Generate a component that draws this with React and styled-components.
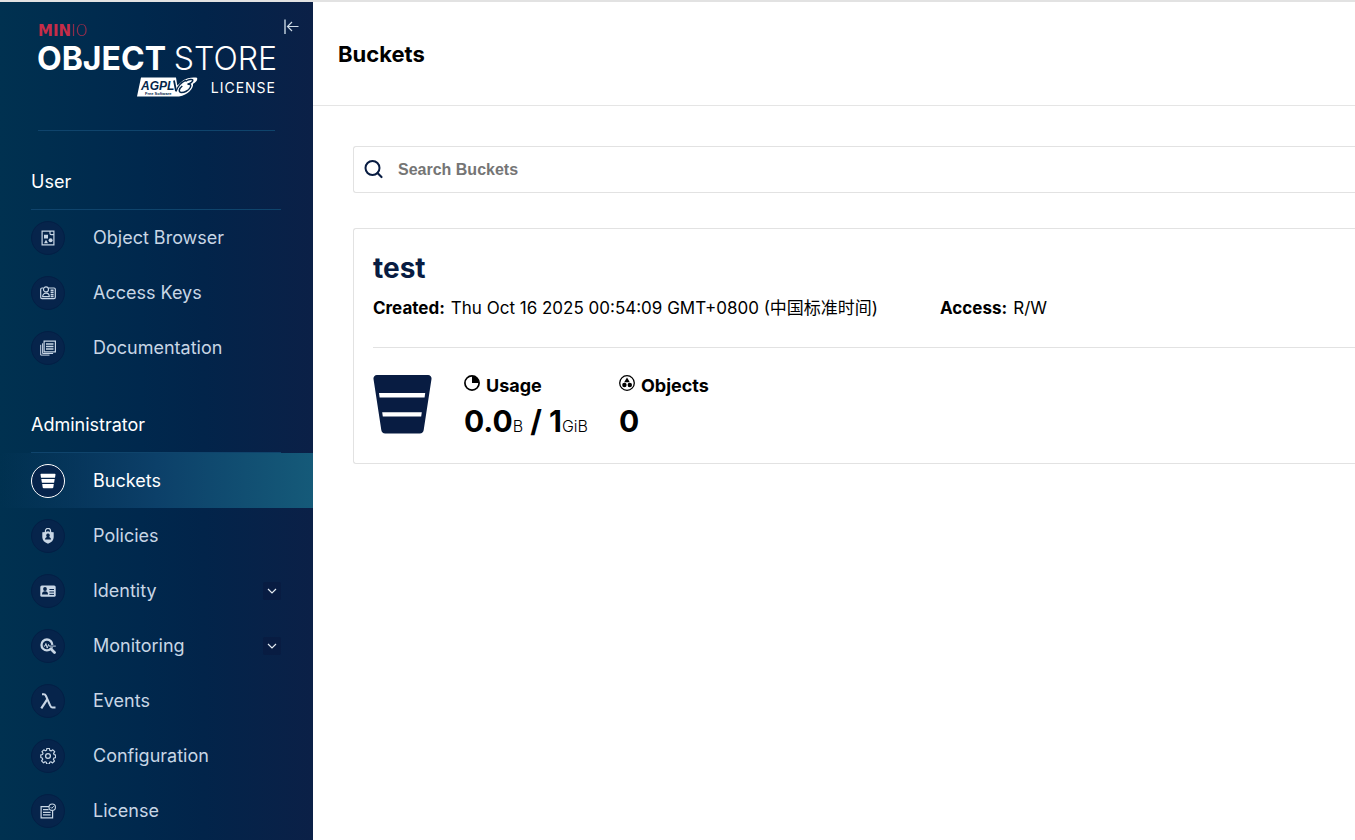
import React from "react";
import styled, { createGlobalStyle } from "styled-components";

const sans = `Inter, "Noto Sans CJK SC", "Liberation Sans", sans-serif`;

const GlobalStyle = createGlobalStyle`
  *, *::before, *::after { box-sizing: border-box; }
  body {
    margin: 0;
    background: #fff;
    color: #000;
    font-family: ${sans};
    font-size: 18px;
  }
`;

const Page = styled.div`
  display: flex;
  min-height: 100vh;
  border-top: 2px solid #e2e2e2;
  overflow: hidden;
`;

const Sidebar = styled.aside`
  flex: 0 0 313px;
  background: linear-gradient(90deg, #003150 0%, #00284d 45%, #02244a 65%, #0b2047 100%);
  color: #fff;
`;

/* ---------- product logo ---------- */

const Brand = styled.div`
  position: relative;
  height: 130px;
  margin: 0 38px;
  padding-top: 20px;
`;

const BrandRule = styled.hr`
  margin: 34px 0 0;
  border: 0;
  border-top: 1px solid #0f446c;
`;

const Maker = styled.div`
  font: 700 15px/18px "DejaVu Sans", ${sans};
  color: #c72c48;

  span {
    font-weight: 200;
  }
`;

const Product = styled.div`
  display: flex;
  justify-content: space-between;
  margin: 0 -2px 0 -1px;
  font-size: 32px;
  line-height: 38px;
  font-weight: 700;
  white-space: nowrap;

  span {
    font-weight: 300;
  }
`;

const LicenseLine = styled.div`
  display: flex;
  justify-content: flex-end;
  align-items: center;
  gap: 13px;
  height: 18px;
  font-size: 14px;
`;

const LicenseWord = styled.span`
  margin-right: -1px;
  letter-spacing: 1px;
  font-weight: 400;
`;

const CollapseButton = styled.button`
  position: absolute;
  top: 16px;
  right: -24px;
  display: flex;
  width: 16px;
  height: 18px;
  padding: 0;
  border: 0;
  background: none;
  color: #cfdbe6;
  cursor: pointer;
`;

/* ---------- navigation ---------- */

const GroupTitle = styled.h2`
  margin: 0 32px 0 31px;
  padding: 39px 0 16px;
  border-bottom: 1px solid #0f446c;
  font-size: 18px;
  line-height: 22px;
  font-weight: 400;
`;

const NavList = styled.ul`
  margin: 0;
  padding: 0;
  list-style: none;
`;

const NavLink = styled.a`
  display: flex;
  align-items: center;
  height: 55px;
  padding: 0 32px 0 31px;
  color: ${(p) => (p.$active ? "#fff" : "#c8d6e5")};
  background: ${(p) =>
    p.$active ? "linear-gradient(90deg, #00305000 0%, #0c4069 50%, #155a79 100%)" : "none"};
  text-decoration: none;
`;

const IconDisc = styled.span`
  display: flex;
  flex: none;
  align-items: center;
  justify-content: center;
  width: 34px;
  height: 34px;
  margin-right: 28px;
  border: 1px solid ${(p) => (p.$active ? "#fff" : "#031f45")};
  border-radius: 50%;
  background: #06244b;
`;

const NavLabel = styled.span`
  flex: 1;
`;

const Toggle = styled.span`
  display: flex;
  align-items: center;
  justify-content: center;
  width: 18px;
  height: 18px;
  border-radius: 2px;
  background: #081c42;
`;

/* ---------- main area ---------- */

const Main = styled.main`
  flex: 1;
  min-width: 0;
`;

const Header = styled.header`
  display: flex;
  align-items: center;
  height: 104px;
  padding: 0 25px;
  border-bottom: 1px solid #e5e5e5;
`;

const PageTitle = styled.h1`
  margin: 0;
  font-size: 22px;
  line-height: 28px;
  font-weight: 700;
`;

const Content = styled.div`
  display: flex;
  flex-direction: column;
  gap: 35px;
  padding: 40px 0 40px 40px;
`;

const SearchBox = styled.label`
  display: flex;
  align-items: center;
  gap: 14px;
  height: 47px;
  padding: 0 10px;
  border: 1px solid #e2e2e2;
  border-right: 0;
  border-radius: 3px 0 0 3px;
`;

const SearchInput = styled.input`
  flex: 1;
  min-width: 0;
  padding: 0;
  border: 0;
  outline: 0;
  background: none;
  font: 700 16px/20px "Liberation Sans", Arial, sans-serif;

  &::placeholder {
    color: #757575;
    opacity: 1;
  }
`;

const Card = styled.article`
  padding: 22px 0 18px 19px;
  border: 1px solid #e2e2e2;
  border-right: 0;
  border-radius: 3px 0 0 3px;
`;

const BucketName = styled.h2`
  margin: 0;
  color: #081c42;
  font-size: 28px;
  line-height: 34px;
  font-weight: 700;
`;

const Facts = styled.dl`
  display: flex;
  gap: 62px;
  margin: 0;
  padding: 12px 0 28px;
  border-bottom: 1px solid #e2e2e2;
  font-size: 17px;
  line-height: 22px;
`;

const Fact = styled.div`
  display: flex;
  gap: 6px;
  white-space: nowrap;

  dt { font-weight: 700; }
  dd { margin: 0; }
`;

const Stats = styled.div`
  display: flex;
  padding-top: 27px;
`;

const BucketArt = styled.div`
  display: flex;
  width: 59px;
  height: 59px;
  margin-right: 32px;
`;

const Stat = styled.section`
  margin-right: 31px;
`;

const StatTitle = styled.h3`
  display: flex;
  gap: 6px;
  margin: 0;
  font-size: 18px;
  line-height: 22px;
  font-weight: 700;
`;

const StatValue = styled.p`
  margin: 5px 0 0;
  font-size: 30px;
  line-height: 38px;
  font-weight: 700;
  white-space: nowrap;

  small {
    font-size: 16px;
    font-weight: 300;
  }
`;

/* ---------- drawings ---------- */

const Glyph = ({ size = 16, box = 16, children }) => (
  <svg width={size} height={size} viewBox={`0 0 ${box} ${box}`} fill="none" aria-hidden="true">
    {children}
  </svg>
);

const BrowserIcon = () => (
  <Glyph>
    <path d="M2.100 1.100h11.800v13.800H2.100z" stroke="currentColor" strokeWidth="1.200" />
    <path d="M10 1v2.400a1.200 1.200 0 0 0 1.200 1.200H14" stroke="currentColor" strokeWidth="1.200" />
    <path d="M4 4.800h4v3.600H4zM6 9.800l2 3.400H4z" fill="currentColor" />
    <circle cx="10.600" cy="10.200" r="2" fill="currentColor" />
  </Glyph>
);

const KeysIcon = () => (
  <Glyph>
    <path d="M3.400 3H2a1.300 1.300 0 0 0-1.300 1.300v8A1.300 1.300 0 0 0 2 13.600h12a1.300 1.300 0 0 0 1.300-1.300v-8A1.300 1.300 0 0 0 14 3H8.600" stroke="currentColor" strokeWidth="1.200" />
    <circle cx="6" cy="4.400" r="2.500" stroke="currentColor" strokeWidth="1.200" />
    <path d="M2.700 11.600c0-2.200 1.400-3.400 3.300-3.400s3.300 1.200 3.300 3.400z" stroke="currentColor" strokeWidth="1.200" />
    <path d="M10.600 5.200h3M10.600 7.300h3M10.600 9.400h3M10.600 11.500h3" stroke="currentColor" strokeWidth="1.500" />
  </Glyph>
);

const DocsIcon = () => (
  <Glyph>
    <path d="M4.100 1.100h11.300v10.800H4.100z" stroke="currentColor" strokeWidth="1.200" />
    <path d="M6 4h7.500M6 6.500h7.500M6 9h7.500" stroke="currentColor" strokeWidth="1.300" />
    <path d="M2.600 3.300v10.200h10.500M.7 4.800v10.300h8.800" stroke="currentColor" strokeWidth="1" />
  </Glyph>
);

const BucketIcon = () => (
  <Glyph>
    <path d="M1.200.8h13.600a.7.7 0 0 1 .7.800l-.5 3.200H1L.5 1.600a.7.7 0 0 1 .7-.8zM1.300 6.100h13.400l-.6 3.700H1.900zM2.200 11.100h11.600l-.5 3.300a1 1 0 0 1-1 .8H3.700a1 1 0 0 1-1-.8z" fill="currentColor" />
  </Glyph>
);

const PolicyIcon = () => (
  <Glyph>
    <path d="M5.400 4V3a2.600 2.600 0 0 1 5.200 0v1" stroke="currentColor" strokeWidth="1.200" />
    <path fillRule="evenodd" d="M2.300 4.200c2.200 0 4.100-.3 5.700-1 1.600.7 3.500 1 5.700 1v5.100c0 3-2.200 5.200-5.700 6.500-3.500-1.300-5.700-3.500-5.700-6.500zM8 5.600a1.900 1.900 0 0 0-1.200 3.300C5.700 9.300 5 10.300 5 11.600h6c0-1.300-.7-2.300-1.800-2.700A1.900 1.900 0 0 0 8 5.600z" fill="currentColor" />
  </Glyph>
);

const IdentityIcon = () => (
  <Glyph>
    <rect x=".3" y="2.400" width="15.400" height="11.400" rx="1.600" fill="currentColor" />
    <circle cx="5" cy="6" r="1.900" fill="#06244b" />
    <path d="M2 11.600c0-2.200 1.200-3.300 3-3.300s3 1.100 3 3.300z" fill="#06244b" />
    <path d="M9.400 6.500h4.600M9.400 9h4.600M9.400 11.400h4.600" stroke="#06244b" strokeWidth="1" />
  </Glyph>
);

const MonitorIcon = () => (
  <Glyph>
    <circle cx="6.900" cy="6.900" r="5.400" stroke="currentColor" strokeWidth="2.300" />
    <path d="M11 11l3.500 3.500" stroke="currentColor" strokeWidth="2.800" strokeLinecap="round" />
    <path d="M9.500 8.100h6.400" stroke="#06244b" strokeWidth="2.400" />
    <path d="M3.800 8.100h1.200l.9-2.600 1.300 4.600 1.300-3.600.7 1.600h6.600" stroke="currentColor" strokeWidth="1" />
  </Glyph>
);

const LambdaIcon = () => (
  <Glyph>
    <path d="M2 1.200h1.800c1.200 0 1.700.6 2.200 1.800l4.100 9.300c.6 1.400 1.200 2.100 2.400 2.100h3" stroke="currentColor" strokeWidth="2" />
    <path d="M7.200 6.400L1.300 15.300" stroke="currentColor" strokeWidth="2.200" />
  </Glyph>
);

const GearIcon = () => (
  <Glyph>
    <path d="M6.700 1h2.600l.4 1.900 1.300.5 1.700-1.100 1.900 1.900-1.100 1.700.5 1.200 1.500.4v2.600l-1.700.4-.5 1.300 1.100 1.700-1.900 1.900-1.700-1.100-1.200.5-.4 1.700H6.600l-.4-1.800-1.200-.5-1.600 1.100-1.900-1.900 1.100-1.600-.5-1.300L.7 10V7.400L2.400 7l.5-1.300-1-1.600 1.800-1.800 1.600 1 1.200-.5z" transform="translate(.1 -.5)" stroke="currentColor" strokeWidth="1.200" strokeLinejoin="round" />
    <circle cx="8" cy="8" r="2.400" stroke="currentColor" strokeWidth="1.300" />
  </Glyph>
);

const LicenseIcon = () => (
  <Glyph>
    <path d="M9 3.600H1.100v11.300h11.500V8" stroke="currentColor" strokeWidth="1.200" />
    <path d="M3 6.700h5.600M3 9.300h7.600M3 11.900h7.600" stroke="currentColor" strokeWidth="1.200" />
    <circle cx="12.200" cy="4.200" r="3.200" stroke="currentColor" strokeWidth="1.100" />
    <path d="M10.700 4.200l1.100 1.100 2-2.100" stroke="currentColor" strokeWidth="1" />
  </Glyph>
);

const ChevronIcon = () => (
  <Glyph size={10} box={10}>
    <path d="M1 3l4 4 4-4" stroke="#e3eaf1" strokeWidth="1.200" />
  </Glyph>
);

const CollapseIcon = () => (
  <svg width="16" height="18" viewBox="0 0 16 18" fill="none" aria-hidden="true">
    <path d="M2 1.500v14.500" stroke="#8d9fb3" strokeWidth="2" />
    <path d="M15.500 8.500H4.500M9 4L4.500 8.500 9 13" stroke="currentColor" strokeWidth="1.200" />
  </svg>
);

const SearchIcon = () => (
  <Glyph size={20} box={20}>
    <circle cx="8.500" cy="8" r="7" stroke="#081c42" strokeWidth="2" />
    <path d="M13.500 13l4 4" stroke="#081c42" strokeWidth="2.200" strokeLinecap="round" />
  </Glyph>
);

const BigBucket = () => (
  <Glyph size={59} box={59}>
    <path d="M4 0h51a3.500 3.500 0 0 1 3.500 4l-7.800 51a4 4 0 0 1-4 3.400H12.300a4 4 0 0 1-4-3.400L.5 4A3.500 3.500 0 0 1 4 0z" fill="#081c42" />
    <path d="M6 18h46.200l-.6 4.400H6.600zM9.200 37.200h39.600l-.6 4.400H9.800z" fill="#fff" />
  </Glyph>
);

const UsageIcon = () => (
  <Glyph>
    <circle cx="8" cy="8" r="7.100" stroke="#000" strokeWidth="1.700" />
    <path d="M8 .9a7.100 7.100 0 0 1 7.100 7.100H8z" fill="#000" />
  </Glyph>
);

const ObjectsIcon = () => (
  <Glyph>
    <circle cx="8" cy="8" r="7.300" stroke="#000" strokeWidth="1.300" />
    <path d="M8 2.600l2.800 4.600H5.200z" fill="#000" />
    <circle cx="5.400" cy="10" r="2.200" fill="#000" />
    <circle cx="10.800" cy="10" r="2.200" fill="#000" />
  </Glyph>
);

const AgplBadge = () => (
  <svg width="61" height="20" viewBox="0 0 61 20" aria-label="AGPL v3 Free Software" role="img">
    <path d="M4 .5h35l1.300 8L46 3.500C50 .3 57 0 60 .8c1 2-1 4.500-4 6 1 4-5 11.500-14 12.700H0z" fill="#fff" />
    <text x="4" y="13" fontFamily="Liberation Sans, sans-serif" fontStyle="italic" fontWeight="700" fontSize="12" fill="#04264b">AGPL</text>
    <text x="8" y="18" fontFamily="Liberation Sans, sans-serif" fontWeight="700" fontSize="4" fill="#04264b">Free Software</text>
    <path d="M37 3.500l2 10.500" fill="none" stroke="#04264b" strokeWidth="1.800" />
    <path d="M39 14.500C40.500 10 44 5.500 49 3.200" fill="none" stroke="#04264b" strokeWidth="1.300" />
    <path d="M48.500 4.300c3-1.800 6.800-2.300 7.300-1.200.5 1.300-2.300 3.200-5.300 4.200 3-.4 4 .8 2.700 3.200-1.600 3-5.900 5.300-9.200 5-2.800-.4-2-4.200 1.300-6.500" fill="none" stroke="#04264b" strokeWidth="1.500" />
  </svg>
);

/* ---------- data ---------- */

const groups = [
  {
    title: "User",
    items: [
      { label: "Object Browser", Icon: BrowserIcon },
      { label: "Access Keys", Icon: KeysIcon },
      { label: "Documentation", Icon: DocsIcon },
    ],
  },
  {
    title: "Administrator",
    items: [
      { label: "Buckets", Icon: BucketIcon, active: true },
      { label: "Policies", Icon: PolicyIcon },
      { label: "Identity", Icon: IdentityIcon, expandable: true },
      { label: "Monitoring", Icon: MonitorIcon, expandable: true },
      { label: "Events", Icon: LambdaIcon },
      { label: "Configuration", Icon: GearIcon },
      { label: "License", Icon: LicenseIcon },
    ],
  },
];

export default function App() {
  return (
    <>
      <GlobalStyle />
      <Page>
        <Sidebar>
          <Brand>
            <Maker>MIN<span>IO</span></Maker>
            <Product>OBJECT<span>STORE</span></Product>
            <LicenseLine><AgplBadge /><LicenseWord>LICENSE</LicenseWord></LicenseLine>
            <BrandRule />
            <CollapseButton type="button" aria-label="Collapse menu"><CollapseIcon /></CollapseButton>
          </Brand>
          <nav>
            {groups.map((group) => (
              <React.Fragment key={group.title}>
                <GroupTitle>{group.title}</GroupTitle>
                <NavList>
                  {group.items.map(({ label, Icon, active, expandable }) => (
                    <li key={label}>
                      <NavLink href="#" $active={active} aria-current={active ? "page" : undefined}>
                        <IconDisc $active={active}><Icon /></IconDisc>
                        <NavLabel>{label}</NavLabel>
                        {expandable && <Toggle><ChevronIcon /></Toggle>}
                      </NavLink>
                    </li>
                  ))}
                </NavList>
              </React.Fragment>
            ))}
          </nav>
        </Sidebar>
        <Main>
          <Header><PageTitle>Buckets</PageTitle></Header>
          <Content>
            <SearchBox>
              <SearchIcon />
              <SearchInput type="text" placeholder="Search Buckets" aria-label="Search Buckets" />
            </SearchBox>
            <Card>
              <BucketName>test</BucketName>
              <Facts>
                <Fact><dt>Created:</dt><dd>Thu Oct 16 2025 00:54:09 GMT+0800 (中国标准时间)</dd></Fact>
                <Fact><dt>Access:</dt><dd>R/W</dd></Fact>
              </Facts>
              <Stats>
                <BucketArt><BigBucket /></BucketArt>
                <Stat>
                  <StatTitle><UsageIcon />Usage</StatTitle>
                  <StatValue>0.0<small>B</small> / 1<small>GiB</small></StatValue>
                </Stat>
                <Stat>
                  <StatTitle><ObjectsIcon />Objects</StatTitle>
                  <StatValue>0</StatValue>
                </Stat>
              </Stats>
            </Card>
          </Content>
        </Main>
      </Page>
    </>
  );
}
